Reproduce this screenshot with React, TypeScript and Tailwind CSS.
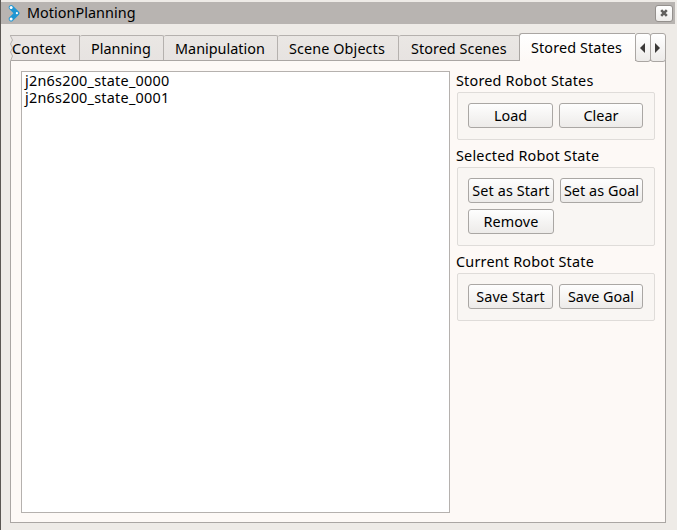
import React from "react";

type TabProps = { label: string; className: string };

function Tab({ label, className }: TabProps) {
  return (
    <div
      className={`mt-[2px] flex h-[25px] shrink-0 items-center whitespace-nowrap rounded-t-[2px] border-t border-r border-[#b5b1ae] bg-gradient-to-b from-[#eae7e4] to-[#e7e3e1] ${className}`}
    >
      <span className="relative top-px">{label}</span>
    </div>
  );
}

function PushButton({ label, className }: { label: string; className: string }) {
  return (
    <button
      className={`flex h-[25px] shrink-0 items-center justify-center whitespace-nowrap rounded-[3px] border border-[#aaa7a4] bg-gradient-to-b from-[#fefefe] to-[#edebe9] ${className}`}
    >
      {label}
    </button>
  );
}

function Group({ title, className, children }: { title: string; className: string; children: React.ReactNode }) {
  return (
    <section>
      <h2 className="flex h-[22px] items-center whitespace-nowrap tracking-[0.2px]">{title}</h2>
      <div className={`ml-px flex w-[198px] flex-col gap-[6px] rounded-[2px] border border-[#dfdcd9] bg-[#f9f6f3] pl-[10px] pt-[10px] ${className}`}>
        {children}
      </div>
    </section>
  );
}

export default function App() {
  return (
    <div className="flex h-[530px] w-[677px] flex-col overflow-hidden border-l border-[#5b5753] bg-[#eeebe7] pt-[2px] font-['Noto_Sans',sans-serif] text-[14.4px] leading-[18px] text-black">
      <header className="flex h-[22px] w-[674px] shrink-0 items-center bg-[#b8b4b1] pl-[7px] pr-[2px]">
        <svg className="h-[18px] w-[13px] shrink-0" viewBox="0 0 13 18">
          <path d="M3.2 3.5L9 9.2L3.2 15" fill="none" stroke="#2196d2" strokeWidth="4.8" strokeLinejoin="round" strokeLinecap="round" />
          <circle cx="3.1" cy="3.5" r="1.5" fill="#fff" />
          <circle cx="8.9" cy="9.2" r="1.1" fill="#fff" />
          <circle cx="3.1" cy="15" r="1.5" fill="#fff" />
        </svg>
        <h1 className="ml-[6px] whitespace-nowrap tracking-[0.04px]">MotionPlanning</h1>
        <button className="ml-auto flex h-[17px] w-[18px] items-center justify-center rounded-[3px] border border-[#94908d] bg-gradient-to-b from-white to-[#eeecea]">
          <svg className="h-2 w-2" viewBox="0 0 8 8">
            <path d="M1.2 1.2L6.8 6.8M6.8 1.2L1.2 6.8" stroke="#62605e" strokeWidth="2.6" />
          </svg>
        </button>
      </header>

      <nav className="z-10 ml-[9px] mt-[9px] flex h-[28px] w-[656px] shrink-0">
        <div className="mt-[2px] flex h-[25px] w-[70px] shrink-0 items-center whitespace-nowrap border-t border-r border-[#b5b1ae] bg-[#e9e5e3]">
          <svg className="h-[25px] w-[4px] shrink-0" viewBox="0 0 4 25">
            <path d="M0 0H1L3 4L1 8L3 12L1 16L3 20L1 24V25H0Z" fill="#eeebe7" />
            <path d="M.5 0L2.5 4L.5 8L2.5 12L.5 16L2.5 20L.5 25" fill="none" stroke="#b5b1ae" />
          </svg>
          <span className="relative top-px -ml-[2px] tracking-[0.2px]">Context</span>
        </div>
        <Tab label="Planning" className="w-[84px] pl-[11px]" />
        <Tab label="Manipulation" className="w-[114px] pl-[11px]" />
        <Tab label="Scene Objects" className="w-[121px] pl-[11px] tracking-[0.1px]" />
        <Tab label="Stored Scenes" className="w-[121px] pl-[12px] tracking-[0.05px]" />
        <div className="-ml-px flex h-[28px] w-[116px] shrink-0 items-center whitespace-nowrap rounded-tl-[3px] border-l border-t border-[#aaa6a3] bg-gradient-to-b from-white to-[#fdf9f6] pl-[11px] tracking-[0.12px]">
          Stored States
        </div>
        <button className="flex h-[29px] w-4 shrink-0 items-center justify-center rounded-[3px] border border-[#aaa6a3] bg-gradient-to-b from-white to-[#edebe9]">
          <svg className="h-[10px] w-[6px]" viewBox="0 0 6 10"><path d="M5 0V10L0 5Z" fill="#3b3938" /></svg>
        </button>
        <button className="-ml-px flex h-[29px] w-4 shrink-0 items-center justify-center rounded-[3px] border border-[#aaa6a3] bg-gradient-to-b from-white to-[#edebe9]">
          <svg className="h-[10px] w-[6px]" viewBox="0 0 6 10"><path d="M0 0V10L5 5Z" fill="#3b3938" /></svg>
        </button>
      </nav>

      <main className="-mt-px ml-[9px] flex h-[463px] w-[656px] shrink-0 border border-[#aaa6a3] bg-[#fdf9f6] pl-[10px] pt-[10px]">
        <ul className="h-[442px] w-[429px] shrink-0 border border-[#b5b1ae] bg-white pl-[3px] leading-[17px] tracking-[0.24px]">
          <li>j2n6s200_state_0000</li>
          <li>j2n6s200_state_0001</li>
        </ul>
        <aside className="-mt-px ml-[6px] flex flex-col gap-[5px]">
          <Group title="Stored Robot States" className="h-[48px]">
            <div className="flex gap-[6px]">
              <PushButton label="Load" className="w-[85px]" />
              <PushButton label="Clear" className="w-[84px]" />
            </div>
          </Group>
          <Group title="Selected Robot State" className="h-[79px]">
            <div className="flex gap-[6px]">
              <PushButton label="Set as Start" className="w-[86px] tracking-[0.12px]" />
              <PushButton label="Set as Goal" className="w-[83px] tracking-[0.05px]" />
            </div>
            <PushButton label="Remove" className="w-[86px] tracking-[0.1px]" />
          </Group>
          <Group title="Current Robot State" className="h-[48px]">
            <div className="flex gap-[6px]">
              <PushButton label="Save Start" className="w-[85px] tracking-[0.1px]" />
              <PushButton label="Save Goal" className="w-[84px]" />
            </div>
          </Group>
        </aside>
      </main>
    </div>
  );
}
